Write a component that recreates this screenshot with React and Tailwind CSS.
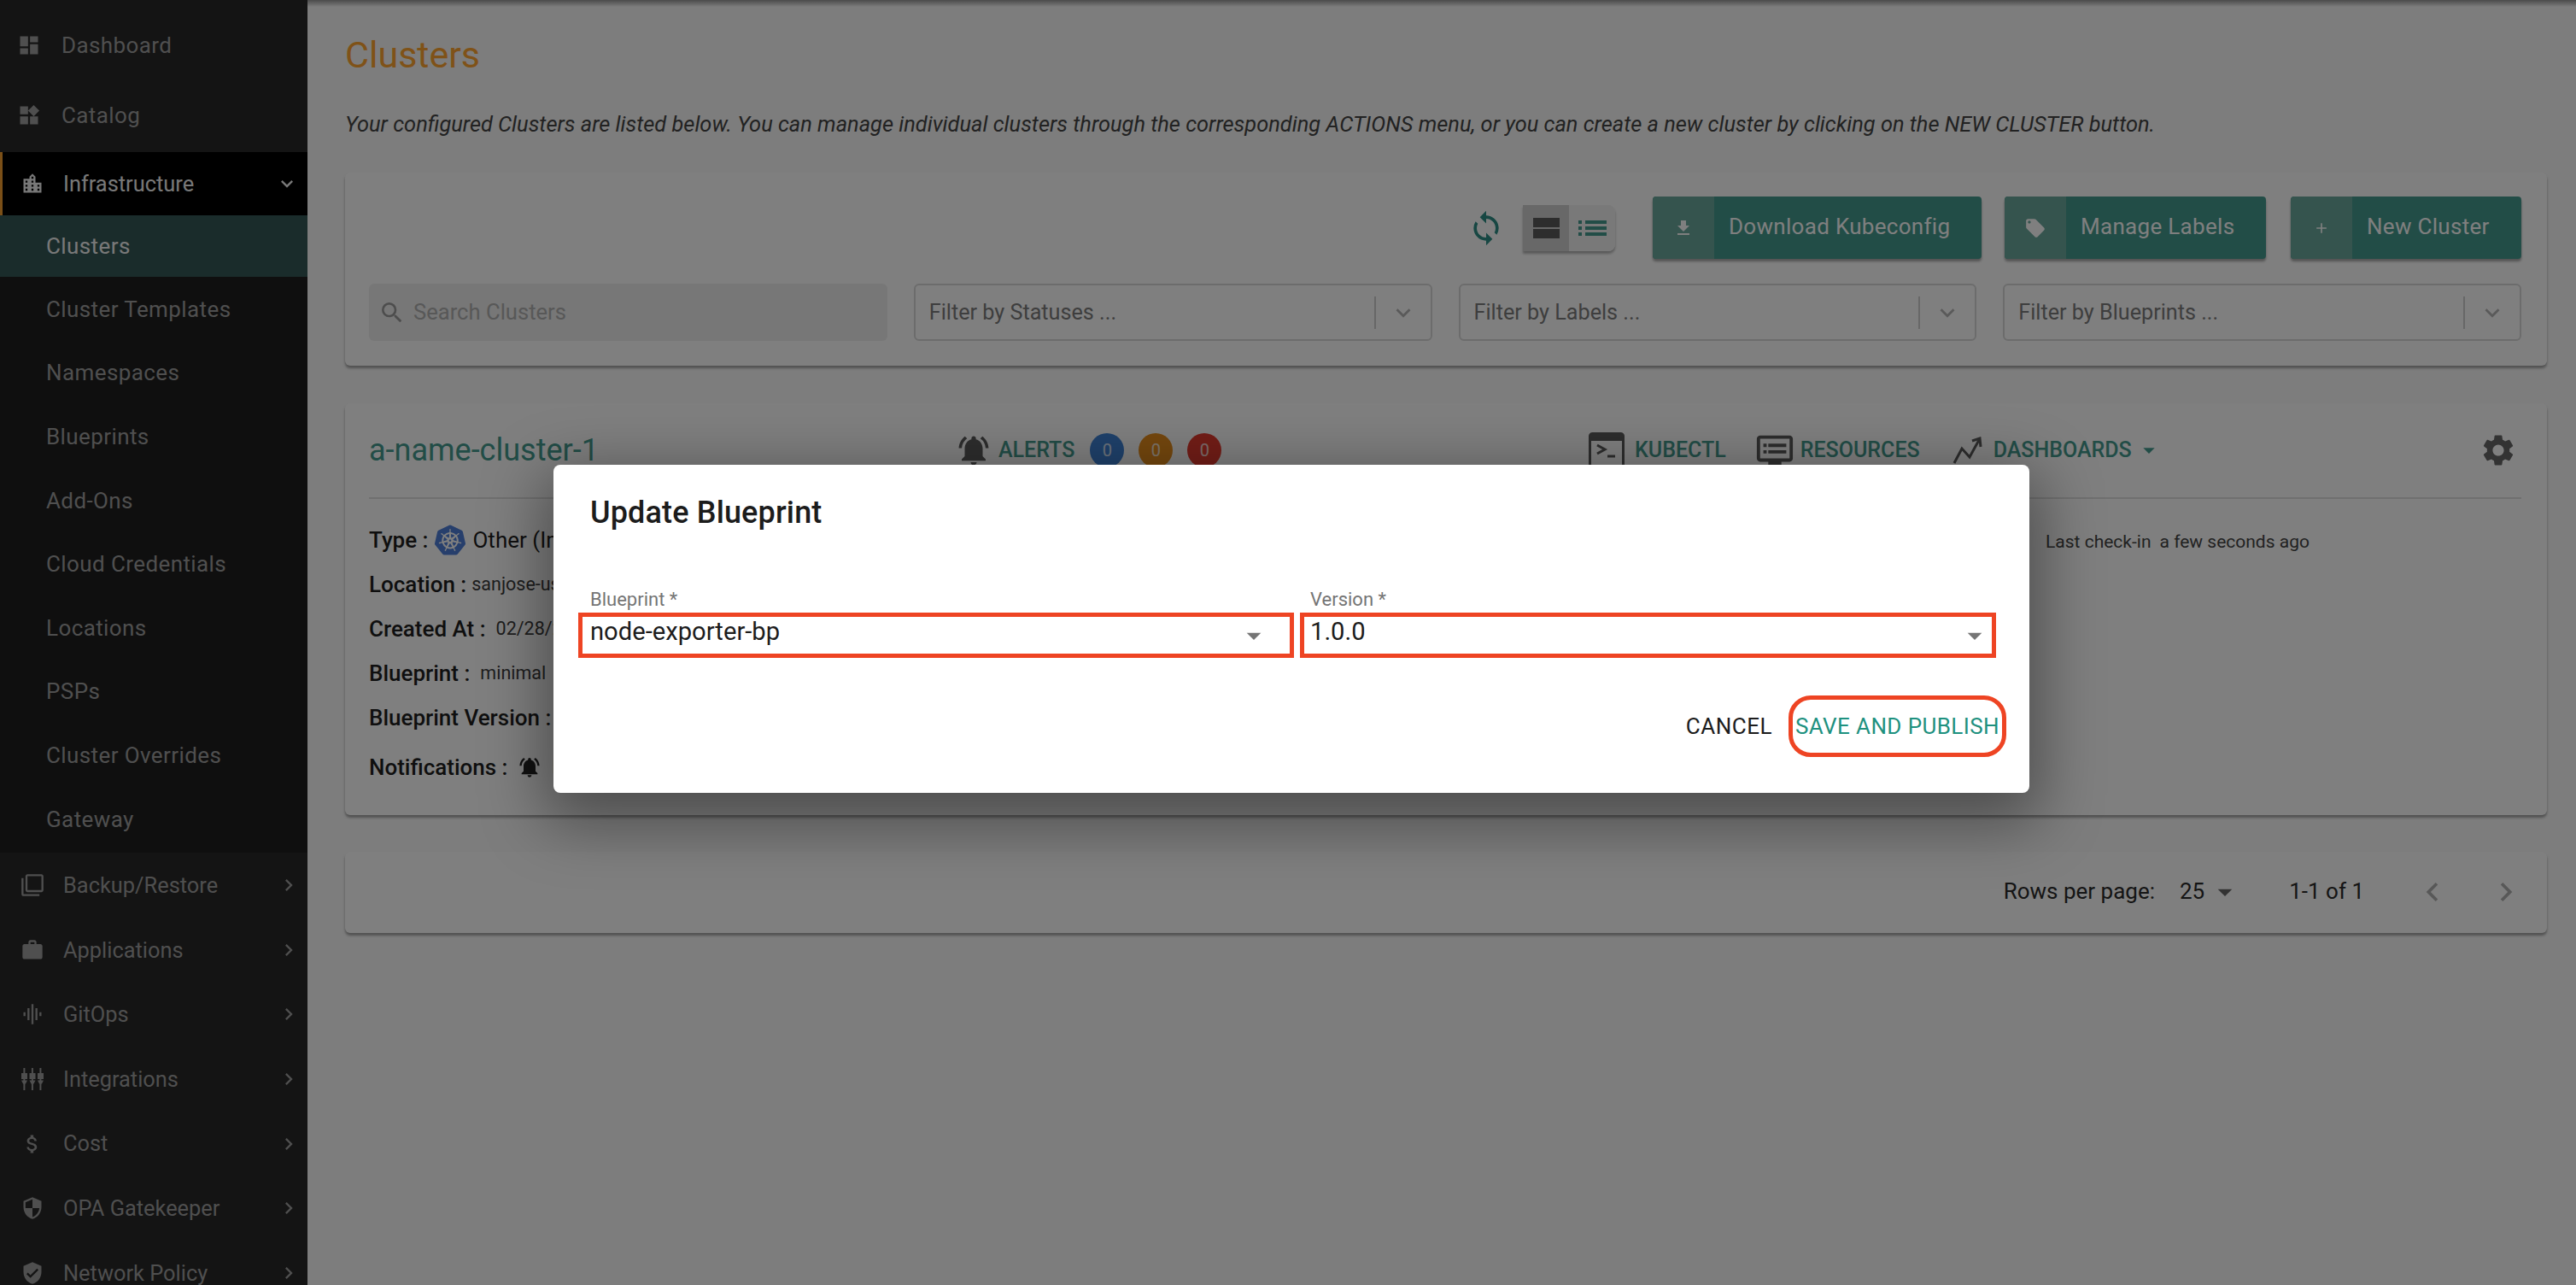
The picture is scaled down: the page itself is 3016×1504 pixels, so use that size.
import {
  MdDashboard, MdWidgets, MdLocationCity, MdFilterNone, MdWork, MdGraphicEq, MdAttachMoney,
  MdSecurity, MdVerifiedUser, MdKeyboardArrowDown, MdKeyboardArrowRight, MdSync,
  MdGetApp, MdLocalOffer, MdAdd, MdSearch, MdNotificationsActive, MdDvr,
  MdSettings, MdArrowDropDown, MdChevronLeft, MdChevronRight, MdOpenInNew,
} from 'react-icons/md'
import { SiKubernetes } from 'react-icons/si'

function IntegrationsIcon({ className }) {
  return (
    <svg viewBox="0 0 28 28" className={className} fill="currentColor">
      {[1, 10.5, 20].map((x) => (
        <g key={x}>
          <rect x={x + 2.4} y="1" width="2" height="26" />
          <path d={`M${x} 7h7v7h-7z M${x} 15.5h7l-2 4h-3z`} />
        </g>
      ))}
    </svg>
  )
}

function TerminalIcon({ className }) {
  return (
    <svg viewBox="0 0 42 42" className={className} fill="none" stroke="currentColor">
      <rect x="1.5" y="1.5" width="39" height="39" rx="3" strokeWidth="3" />
      <path d="M1 2h40v8H1z" fill="currentColor" stroke="none" />
      <path d="M10 15l9 5-9 5M22 28h9" strokeWidth="3" />
    </svg>
  )
}

function ZigzagIcon({ className }) {
  return (
    <svg viewBox="0 0 36 36" className={className} fill="none" stroke="currentColor" strokeWidth="3">
      <path d="M2 33l9-17 9 10L31 6" />
      <path d="M23 7l9-3 1 10" />
    </svg>
  )
}

function StackViewIcon({ className }) {
  return (
    <svg viewBox="0 0 31 24" className={className} fill="currentColor">
      <path d="M0 0h31v11H0z M0 13h31v11H0z" />
    </svg>
  )
}

function ListViewIcon({ className }) {
  return (
    <svg viewBox="0 0 33 18" className={className} fill="currentColor">
      <path d="M0 0h4v4H0z M8 0h25v4H8z M0 7h4v4H0z M8 7h25v4H8z M0 14h4v4H0z M8 14h25v4H8z" />
    </svg>
  )
}

const topItems = [
  { label: 'Dashboard', icon: MdDashboard, cls: 'mt-4' },
  { label: 'Catalog', icon: MdWidgets, cls: 'mt-2' },
]
const subItems = ['Cluster Templates', 'Namespaces', 'Blueprints', 'Add-Ons', 'Cloud Credentials', 'Locations', 'PSPs', 'Cluster Overrides', 'Gateway']
const bottomItems = [
  { label: 'Backup/Restore', icon: MdFilterNone },
  { label: 'Applications', icon: MdWork },
  { label: 'GitOps', icon: MdGraphicEq },
  { label: 'Integrations', icon: IntegrationsIcon },
  { label: 'Cost', icon: MdAttachMoney },
  { label: 'OPA Gatekeeper', icon: MdSecurity },
  { label: 'Network Policy', icon: MdVerifiedUser },
]

function Sidebar() {
  return (
    <aside className="w-[360px] h-full shrink-0 overflow-hidden bg-[#282828] text-[#9e9e9e] text-[26px]">
      {topItems.map((item) => (
        <div key={item.label} className={'h-[74px] flex items-center pl-5 tracking-[0.4px] ' + item.cls}>
          <item.icon className="w-7 h-7 mr-6" />
          <span>{item.label}</span>
        </div>
      ))}
      <div className="h-[74px] mt-1.5 flex items-center pl-[21px] pr-2.5 bg-black border-l-[3px] border-[#f59e2e] text-[#f0f0f0] text-[25.4px]">
        <MdLocationCity className="w-7 h-7 mr-[22px]" />
        <span>Infrastructure</span>
        <MdKeyboardArrowDown className="ml-auto w-7 h-7" />
      </div>
      <div className="bg-[#1e1e1e] pb-[3px] tracking-[0.4px]">
        <div className="h-[72px] flex items-center pl-[54px] bg-[#345856] text-[#f0f0f0]">Clusters</div>
        {subItems.map((label) => (
          <div key={label} className="h-[74.6px] pt-[2px] flex items-center pl-[54px]">{label}</div>
        ))}
      </div>
      {bottomItems.map((item) => (
        <div key={item.label} className="h-[75.6px] flex items-center pl-6 pr-2 text-[25.4px]">
          <item.icon className="w-7 h-7 mr-[22px]" />
          <span>{item.label}</span>
          <MdKeyboardArrowRight className="ml-auto w-7 h-7" />
        </div>
      ))}
    </aside>
  )
}

function ActionButton({ icon: Icon, label, className, iconClass }) {
  return (
    <div className={'h-[73px] flex rounded-[4px] overflow-hidden bg-[#449a8e] text-white shadow-[0_3px_3px_rgba(0,0,0,0.35)] ' + className}>
      <div className="w-[72px] flex items-center justify-center bg-[#6aa89d]">
        <Icon className={iconClass} />
      </div>
      <div className="flex-1 flex items-center pl-[17px] text-[26px] tracking-[0.3px] pb-0.5">{label}</div>
    </div>
  )
}

function FilterSelect({ label }) {
  return (
    <div className="h-[67px] flex items-center rounded-[6px] border-2 border-[#d8d8d8] pl-4 text-[#7c7c7c]">
      <span className="text-[25.2px] flex-1">{label}</span>
      <span className="w-0.5 h-[38px] bg-[#cfcfcf]" />
      <MdKeyboardArrowDown className="w-[34px] h-[34px] mx-[15px] text-[#b5b5b5]" />
    </div>
  )
}

function Toolbar() {
  return (
    <section className="h-[226px] bg-white rounded-[6px] shadow-[0_3px_3px_rgba(0,0,0,0.35)] pt-7 pl-7 pr-[30px]">
      <div className="h-[73px] flex items-center">
        <MdSync className="ml-auto w-[44px] h-[44px] text-[#2f8f86]" />
        <div className="ml-[21px] w-[108px] h-[54px] flex rounded-r-[8px] overflow-hidden shadow-[0_3px_3px_rgba(0,0,0,0.3)]">
          <div className="w-[54px] flex items-center justify-center bg-[#d0d0d0]">
            <StackViewIcon className="w-[31px] h-6 text-[#5a5a5a]" />
          </div>
          <div className="w-[54px] flex items-center justify-center bg-[#f2f2f2]">
            <ListViewIcon className="w-[33px] h-[18px] text-[#449a8e]" />
          </div>
        </div>
        <ActionButton icon={MdGetApp} label="Download Kubeconfig" className="ml-[44px] w-[385px]" iconClass="w-6 h-6" />
        <ActionButton icon={MdLocalOffer} label="Manage Labels" className="ml-[27px] w-[306px]" iconClass="w-[26px] h-[26px]" />
        <ActionButton icon={MdAdd} label="New Cluster" className="ml-[29px] w-[270px]" iconClass="w-5 h-5" />
      </div>
      <div className="mt-[29px] grid grid-cols-4 gap-[31px]">
        <div className="h-[67px] flex items-center rounded-[6px] bg-[#efefef] pl-[11px] text-[#b0b0b0]">
          <MdSearch className="w-8 h-8 mr-[9px] text-[#9a9a9a]" />
          <span className="text-[25.6px]">Search Clusters</span>
        </div>
        <FilterSelect label="Filter by Statuses ..." />
        <FilterSelect label="Filter by Labels ..." />
        <FilterSelect label="Filter by Blueprints ..." />
      </div>
    </section>
  )
}

function CountBadge({ color }) {
  return <span className={'w-[40px] h-[40px] rounded-full flex items-center justify-center text-[20px] text-white/80 ' + color}>0</span>
}

function HeaderLink({ icon, label, className }) {
  return (
    <div className={'flex items-center text-[25px] font-medium text-[#449a8e] ' + className}>
      {icon}
      <span>{label}</span>
    </div>
  )
}

function InfoRow({ label, children, className }) {
  return (
    <div className={'flex items-center text-[#1e1e1e] ' + className}>
      <span className="text-[26px] font-medium">{label}</span>
      {children}
    </div>
  )
}

function ClusterCard() {
  return (
    <section className="relative h-[482px] mt-11 bg-white rounded-[6px] shadow-[0_3px_3px_rgba(0,0,0,0.35)] px-7 pr-[30px]">
      <div className="h-[112px] flex items-center border-b-2 border-[#e0e0e0]">
        <span className="w-[687px] text-[36px] text-[#449a8e]">a-name-cluster-1</span>
        <div className="w-[741px] flex items-center">
          <MdNotificationsActive className="w-[42px] h-[42px] text-[#5a5a5a] mr-2" />
          <span className="text-[25px] font-medium text-[#449a8e] mr-[18px]">ALERTS</span>
          <div className="flex gap-[17px]">
            <CountBadge color="bg-[#3f83d6]" />
            <CountBadge color="bg-[#e88f1d]" />
            <CountBadge color="bg-[#e53a2e]" />
          </div>
        </div>
        <HeaderLink
          icon={<TerminalIcon className="w-[42px] h-[42px] text-[#5a5a5a] mr-3" />}
          label="KUBECTL"
          className="mr-[34px]"
        />
        <HeaderLink
          icon={<MdDvr className="w-[46px] h-[46px] text-[#5a5a5a] mr-[7px]" />}
          label="RESOURCES"
          className="mr-[38px]"
        />
        <HeaderLink
          icon={<ZigzagIcon className="w-[36px] h-[36px] text-[#5a5a5a] mr-3" />}
          label="DASHBOARDS"
        />
        <MdArrowDropDown className="w-8 h-8 ml-1 text-[#449a8e]" />
        <MdSettings className="ml-auto mr-[5px] w-[44px] h-[44px] text-[#666]" />
      </div>
      <InfoRow label="Type :" className="mt-[24px] h-[48px]">
        <span className="mx-2 w-[36px] h-[36px] rounded-full flex items-center justify-center">
          <SiKubernetes className="w-[36px] h-[36px] text-[#4f7fd9]" />
        </span>
        <span className="text-[26px]">Other (Imported)</span>
      </InfoRow>
      <InfoRow label="Location :" className="h-[52px] mt-[2px]">
        <span className="ml-1.5 text-[21.5px] text-[#3c3c3c]">sanjose-us</span>
      </InfoRow>
      <InfoRow label="Created At :" className="h-[52px]">
        <span className="ml-3 text-[21.5px] text-[#3c3c3c]">02/28/2023</span>
      </InfoRow>
      <InfoRow label="Blueprint :" className="h-[52px]">
        <span className="ml-3 text-[21.5px] text-[#3c3c3c]">minimal</span>
      </InfoRow>
      <InfoRow label="Blueprint Version :" className="h-[52px]" />
      <InfoRow label="Notifications :" className="h-[52px] mt-[6px]">
        <MdNotificationsActive className="mx-3 w-7 h-7 text-[#222]" />
        <span className="text-[21.5px] text-[#3c3c3c]">Enabled</span>
      </InfoRow>
      {/* right side of the card, mostly hidden by the dialog */}
      <div className="absolute left-[1991px] top-[147px] text-[21px] text-[#444] whitespace-nowrap">
        <span className="mr-2.5">Last check-in</span>a few seconds ago
      </div>
      <MdOpenInNew className="absolute left-[1935px] top-[250px] w-7 h-7 text-[#449a8e]" />
    </section>
  )
}

function Pagination() {
  return (
    <section className="h-[95px] mt-[43px] bg-white rounded-[6px] shadow-[0_3px_3px_rgba(0,0,0,0.35)] flex items-center text-[26px] text-[#2a2a2a] pb-0.5">
      <span className="ml-auto">Rows per page:</span>
      <span className="ml-[29px]">25</span>
      <MdArrowDropDown className="w-10 h-10 ml-1 text-[#666]" />
      <span className="ml-[55px]">1-1 of 1</span>
      <MdChevronLeft className="ml-[58px] w-[44px] h-[44px] text-[#b0b0b0]" />
      <MdChevronRight className="ml-[42px] mr-[26px] w-[44px] h-[44px] text-[#b0b0b0]" />
    </section>
  )
}

function DialogSelect({ label, value, className, labelClass, boxClass }) {
  return (
    <div className={className}>
      <div className={'h-[30px] text-[22px] leading-[30px] text-[#757575] ' + labelClass}>{label}</div>
      <div className={'h-[53px] flex items-center border-[5px] border-[#ee4423] ' + boxClass}>
        <span className="text-[29.2px] text-[#1c1c1c] pb-2">{value}</span>
        <MdArrowDropDown className="ml-auto w-10 h-10 text-[#757575]" />
      </div>
    </div>
  )
}

function Dialog() {
  return (
    <div className="absolute inset-0 bg-black/50 pt-[544px] pl-[648px]">
      <div className="w-[1728px] h-[384px] bg-white rounded-[8px] shadow-[0_22px_72px_12px_rgba(0,0,0,0.4)] pt-[36px]">
        <h2 className="pl-[43px] text-[36px] leading-10 font-medium tracking-[0.15px] text-[#1c1c1c]">Update Blueprint</h2>
        <div className="mt-[67px] flex pl-[29px]">
          <DialogSelect label="Blueprint *" value="node-exporter-bp" className="w-[838px]" labelClass="pl-[14px]" boxClass="pl-[9px] pr-[22px]" />
          <DialogSelect label="Version *" value="1.0.0" className="ml-[7px] w-[815px]" labelClass="pl-3" boxClass="pl-[7px]" />
        </div>
        <div className="mt-[44px] flex items-center justify-end pr-[27px]">
          <span className="text-[26px] tracking-[0.5px] text-[#1c1c1c] mr-[19px]">CANCEL</span>
          <div className="w-[255px] h-[72px] flex items-center justify-center rounded-[26px] border-[5px] border-[#ee4423] text-[26px] tracking-[0.4px] text-[#1f917f] whitespace-nowrap">
            SAVE AND PUBLISH
          </div>
        </div>
      </div>
    </div>
  )
}

export default function App() {
  return (
    <div className="relative w-[3016px] h-[1504px] overflow-hidden flex bg-[#fafafa] font-['Roboto',sans-serif]">
      <Sidebar />
      <main className="relative flex-1 pl-[44px] pr-[34px]">
        <div className="absolute inset-x-0 top-0 h-2 bg-gradient-to-b from-black/40 to-transparent" />
        <h1 className="pt-[39px] text-[43px] leading-[50px] text-[#ffa530]">Clusters</h1>
        <p className="mt-[41px] text-[25.4px] leading-[30px] italic text-[#444] whitespace-nowrap">
          Your configured Clusters are listed below. You can manage individual clusters through the corresponding ACTIONS menu, or you can create a new cluster by clicking on the NEW CLUSTER button.
        </p>
        <div className="mt-[42px]">
          <Toolbar />
          <ClusterCard />
          <Pagination />
        </div>
      </main>
      <Dialog />
    </div>
  )
}
